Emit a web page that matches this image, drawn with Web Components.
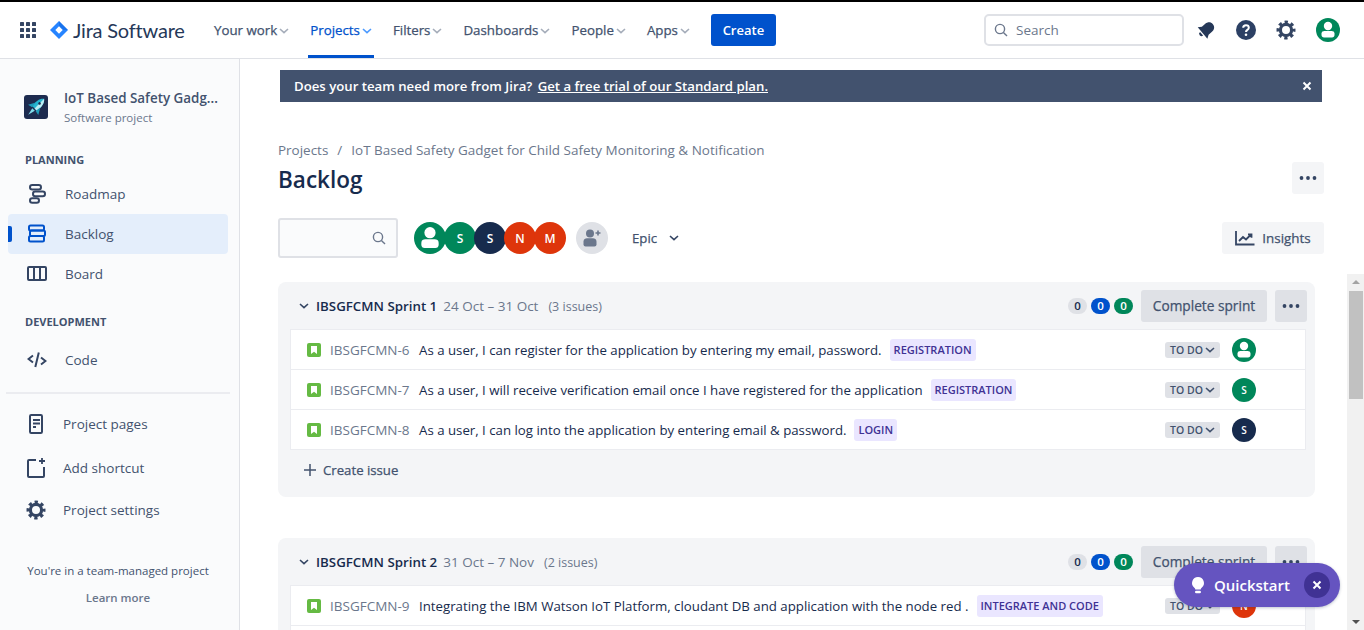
<!DOCTYPE html>
<html lang="en">
<head>
<meta charset="utf-8">
<title>Backlog</title>
<style>
    html, body { margin: 0; height: 100%; overflow: hidden; background: #fff; }
    body { font-family: "Open Sans", "Noto Sans", sans-serif; font-size: 13.5px; color: #172b4d; }
</style>
</head>
<body>
<jira-app></jira-app>
<script>
const icons = {
    grid: `<svg width="16" height="16" viewBox="0 0 16 16" fill="#344563"><rect x="0" y="0" width="4" height="4" rx=".6"/><rect x="6" y="0" width="4" height="4" rx=".6"/><rect x="12" y="0" width="4" height="4" rx=".6"/><rect x="0" y="6" width="4" height="4" rx=".6"/><rect x="6" y="6" width="4" height="4" rx=".6"/><rect x="12" y="6" width="4" height="4" rx=".6"/><rect x="0" y="12" width="4" height="4" rx=".6"/><rect x="6" y="12" width="4" height="4" rx=".6"/><rect x="12" y="12" width="4" height="4" rx=".6"/></svg>`,
    diamond: `<svg width="18" height="18" viewBox="0 0 18 18"><path d="M9 0l9 9-9 9-9-9z" fill="#2684ff"/><path d="M9 0l9 9-4.500 0L9 4.500z" fill="#0052cc" opacity=".35"/><rect x="6.400" y="6.400" width="5.200" height="5.200" transform="rotate(45 9 9)" fill="#fff"/></svg>`,
    chevron: `<svg width="10" height="6" viewBox="0 0 10 6" fill="none" stroke="currentColor" stroke-width="1.600"><path d="M1 1l4 3.600L9 1"/></svg>`,
    search: `<svg width="14" height="14" viewBox="0 0 14 14" fill="none" stroke="#6b778c" stroke-width="1.400"><circle cx="6" cy="6" r="4.600"/><path d="M9.400 9.400L13 13"/></svg>`,
    bell: `<svg width="20" height="20" viewBox="0 0 20 20" fill="#253858"><g transform="rotate(50 10 10)"><path d="M10 1c-3.400 0-5.200 2.600-5.200 5.600v4.400L2.500 14.500h15L15.200 11V6.600C15.200 3.600 13.400 1 10 1z"/><path d="M7.600 15.800h4.800a2.400 2.400 0 0 1-4.800 0z"/></g></svg>`,
    help: `<svg width="20" height="20" viewBox="0 0 20 20"><circle cx="10" cy="10" r="10" fill="#2c4064"/><path d="M7.200 7.800c0-1.600 1.300-2.500 2.800-2.500s2.800.9 2.800 2.400c0 2.200-2.800 2.100-2.800 4.200" fill="none" stroke="#fff" stroke-width="2"/><circle cx="10" cy="14.700" r="1.300" fill="#fff"/></svg>`,
    gear: `<svg width="20" height="20" viewBox="0 0 20 20" fill="none" stroke="#344563"><circle cx="10" cy="10" r="5.600" stroke-width="3.200"/><circle cx="10" cy="10" r="8" stroke-width="3" stroke-dasharray="3.300 2.983" stroke-dashoffset="1.650"/></svg>`,
    roadmap: `<svg width="20" height="20" viewBox="0 0 20 20" fill="none" stroke="#344563" stroke-width="2"><rect x="3" y="1" width="11" height="4.600" rx="2.300"/><rect x="6" y="7.600" width="12" height="4.600" rx="2.300"/><rect x="3" y="14.200" width="9" height="4.600" rx="2.300"/></svg>`,
    backlog: `<svg width="20" height="20" viewBox="0 0 20 20" fill="none" stroke="#0052cc" stroke-width="2"><rect x="2" y="1.500" width="15" height="5" rx="1.500"/><rect x="3" y="6.500" width="15" height="5.500" rx="1.500"/><rect x="2" y="12" width="15" height="5.500" rx="1.500"/></svg>`,
    board: `<svg width="20" height="20" viewBox="0 0 20 20" fill="none" stroke="#344563" stroke-width="2"><rect x="1" y="3" width="18" height="13" rx="1"/><path d="M7 3v13M13 3v13"/></svg>`,
    code: `<svg width="20" height="20" viewBox="0 0 20 20" fill="none" stroke="#344563" stroke-width="2"><path d="M6 5.500L1.500 9 6 12.500M14 7.500l4.500 3.500L14 14.500M11.800 2.500L8.300 17"/></svg>`,
    pages: `<svg width="16" height="20" viewBox="0 0 16 20" fill="none" stroke="#344563" stroke-width="2"><rect x="2" y="1" width="12" height="18" rx="1.200"/><path d="M5 6h7M5 9.500h7M5 13h3"/></svg>`,
    shortcut: `<svg width="20" height="20" viewBox="0 0 20 20" fill="none" stroke="#344563" stroke-width="2"><path d="M10 2H3a1 1 0 0 0-1 1v15a1 1 0 0 0 1 1h14a1 1 0 0 0 1-1V9"/><path d="M16 0v6M13 3h6" stroke-width="1.800"/></svg>`,
    story: `<svg width="14" height="14" viewBox="0 0 14 14"><rect width="14" height="14" rx="2" fill="#65ba43"/><path d="M4 3h6v8L7 8.800 4 11z" fill="#fff"/></svg>`,
    plus: `<svg width="14" height="14" viewBox="0 0 14 14" stroke="#42526e" stroke-width="1.500"><path d="M7 1v12M1 7h12"/></svg>`,
    close: `<svg width="10" height="10" viewBox="0 0 10 10" stroke="#fff" stroke-width="2"><path d="M1.500 1.500l7 7M8.500 1.500l-7 7"/></svg>`,
    dots: `<svg width="18" height="4" viewBox="0 0 18 4" fill="#344563"><circle cx="2.500" cy="2" r="1.900"/><circle cx="9" cy="2" r="1.900"/><circle cx="15.500" cy="2" r="1.900"/></svg>`,
    insights: `<svg width="20" height="16" viewBox="0 0 20 16" fill="none" stroke="#344563" stroke-width="1.800"><path d="M1 1v13.500h18.500"/><path d="M4 11l4-4 3 2.500 5-5M13 4.300h3.500v3.500"/></svg>`,
    bulb: `<svg width="14" height="17" viewBox="0 0 16 20" fill="#fff"><path d="M8 0a7 7 0 0 0-4.300 12.500c.7.600 1.100 1.300 1.100 2.200h6.400c0-.9.400-1.600 1.100-2.200A7 7 0 0 0 8 0z"/><rect x="4.500" y="16.200" width="7" height="3" rx="1.500"/></svg>`,
    addUser: `<svg width="20" height="20" viewBox="0 0 20 20" fill="#6b778c"><circle cx="8" cy="5.500" r="4"/><path d="M1.500 13.500c0-2.200 1.800-3.300 3.500-3.300h6c1.700 0 3.500 1.100 3.500 3.300v3a2 2 0 0 1-2 2h-9a2 2 0 0 1-2-2z"/><path d="M16 2.500v5M13.500 5h5" stroke="#6b778c" stroke-width="1.600"/></svg>`,
    rocket: `<svg width="24" height="24" viewBox="0 0 24 24"><rect width="24" height="24" rx="3" fill="#1d2b4f"/><g transform="rotate(45 12 12)"><path d="M12 .5c3.600 3 4.200 7.500 3.500 13.500h-7C7.800 8 8.400 3.500 12 .5z" fill="#27b5d0"/><path d="M12 .5c3.600 3 4.200 7.500 3.500 13.500H12z" fill="#bdeef5"/><path d="M8.800 9l-4 7 4.700-1zM15.200 9l4 7-4.700-1z" fill="#1f9cba"/><path d="M10.200 15.500h3.600L12 23z" fill="#7fdcea"/><circle cx="12" cy="7" r="1.300" fill="#1d2b4f"/></g></svg>`
};

class UserAvatar extends HTMLElement {
    connectedCallback() {
        const size = this.getAttribute('size') || 24;
        const color = this.getAttribute('color') || '#00875a';
        const letter = this.getAttribute('letter');
        const inner = letter ? letter : `<svg width="100%" height="100%" viewBox="0 0 24 24" fill="#fff"><circle cx="12" cy="8" r="4.200"/><path d="M5.500 15.500c0-1.700 1.400-2.500 3-2.500h7c1.600 0 3 .8 3 2.500v1.500c0 1.500-1 2.500-2.500 2.500h-8C6.500 19.500 5.500 18.500 5.500 17z"/></svg>`;
        this.attachShadow({ mode: 'open' }).innerHTML = `
            <style>
                :host { display: inline-flex; flex: none; }
                .a {
                    width: ${size}px;
                    height: ${size}px;
                    border-radius: 50%;
                    background: ${color};
                    color: #fff;
                    display: flex;
                    align-items: center;
                    justify-content: center;
                    font-weight: 600;
                    font-size: ${size > 24 ? 12 : 10}px;
                    overflow: hidden;
                }
            </style>
            <div class="a">${inner}</div>`;
    }
}
customElements.define('user-avatar', UserAvatar);

class TopItem extends HTMLElement {
    connectedCallback() {
        const active = this.hasAttribute('active');
        this.attachShadow({ mode: 'open' }).innerHTML = `
            <style>
                :host {
                    display: flex;
                    align-items: center;
                    gap: 2px;
                    height: 100%;
                    position: relative;
                    padding: 0 2px;
                    color: ${active ? '#0052cc' : '#42526e'};
                    font-weight: 500;
                    -webkit-text-stroke: .25px currentColor;
                    font-size: 13.3px;
                    white-space: nowrap;
                    flex: none;
                }
                i { color: ${active ? '#4c9aff' : '#a5adba'}; display: flex; margin-top: 1px; }
                b {
                    display: ${active ? 'block' : 'none'};
                    position: absolute;
                    left: 0; right: 0; bottom: 0;
                    height: 3px;
                    background: #0052cc;
                }
            </style>
            <slot></slot><i>${icons.chevron}</i><b></b>`;
    }
}
customElements.define('top-item', TopItem);

class TopNav extends HTMLElement {
    constructor() {
        super();
        this.attachShadow({ mode: 'open' }).innerHTML = `
            <style>
                :host {
                    display: flex;
                    align-items: center;
                    height: 56px;
                    border-top: 2px solid #000;
                    border-bottom: 1px solid #dfe1e6;
                    padding-left: 20px;
                    flex: none;
                    background: #fff;
                }
                .logo { display: flex; align-items: center; margin-left: 14px; gap: 5px; width: 162px; flex: none; }
                .logo span { font-family: "Lato", sans-serif; font-size: 20px; color: #253858; letter-spacing: -.2px; }
                nav { display: flex; align-items: center; height: 100%; gap: 17px; flex: none; }
                .create {
                    margin-left: 19px;
                    width: 65px;
                    height: 32px;
                    flex: none;
                    background: #0052cc;
                    color: #fff;
                    border-radius: 3px;
                    font-weight: 600;
                    font-size: 13px;
                    display: flex;
                    align-items: center;
                    justify-content: center;
                }
                .search {
                    margin-left: auto;
                    width: 200px;
                    height: 32px;
                    flex: none;
                    box-sizing: border-box;
                    border: 2px solid #dfe1e6;
                    border-radius: 5px;
                    display: flex;
                    align-items: center;
                    padding-left: 8px;
                    gap: 8px;
                    color: #6b778c;
                }
                .tools { display: flex; align-items: center; margin: 0 24px 0 12px; gap: 20px; flex: none; }
                svg { display: block; }
            </style>
            ${icons.grid}
            <div class="logo">${icons.diamond}<span>Jira Software</span></div>
            <nav>
                <top-item>Your work</top-item>
                <top-item active>Projects</top-item>
                <top-item>Filters</top-item>
                <top-item>Dashboards</top-item>
                <top-item>People</top-item>
                <top-item>Apps</top-item>
            </nav>
            <div class="create">Create</div>
            <div class="search">${icons.search}<span>Search</span></div>
            <div class="tools">
                ${icons.bell}${icons.help}${icons.gear}
                <user-avatar size="24"></user-avatar>
            </div>`;
    }
}
customElements.define('top-nav', TopNav);

class SideItem extends HTMLElement {
    connectedCallback() {
        const active = this.hasAttribute('active');
        const icon = icons[this.getAttribute('icon')];
        const small = this.hasAttribute('lower');
        this.attachShadow({ mode: 'open' }).innerHTML = `
            <style>
                :host {
                    display: flex;
                    align-items: center;
                    position: relative;
                    height: 40px;
                    margin: 0 11px 0 8px;
                    border-radius: 4px;
                    color: #42526e;
                    background: ${active ? '#e4eefb' : 'transparent'};
                }
                .ic { width: 20px; display: flex; justify-content: center; margin-left: ${small ? 18 : 19}px; }
                .tx { margin-left: ${small ? 17 : 18}px; }
                b {
                    display: ${active ? 'block' : 'none'};
                    position: absolute;
                    left: 0; top: 12px;
                    width: 4px; height: 16px;
                    background: #0052cc;
                    border-radius: 0 2px 2px 0;
                }
            </style>
            <b></b><span class="ic">${icon}</span><span class="tx"><slot></slot></span>`;
    }
}
customElements.define('side-item', SideItem);

class SideBar extends HTMLElement {
    constructor() {
        super();
        this.attachShadow({ mode: 'open' }).innerHTML = `
            <style>
                :host {
                    display: block;
                    width: 240px;
                    flex: none;
                    box-sizing: border-box;
                    background: #fafbfc;
                    border-right: 1px solid #dfe1e6;
                    overflow: hidden;
                }
                .project { display: flex; align-items: center; gap: 16px; padding: 28px 0 0 24px; height: 40px; }
                .project > div { min-width: 0; padding-top: 2px; }
                .name { font-weight: 600; font-size: 13.4px; color: #42526e; line-height: 20px; white-space: nowrap; }
                .type { font-size: 11.5px; color: #6b778c; line-height: 20px; }
                h4 { margin: 0; font-size: 11px; font-weight: 700; color: #42526e; padding-left: 25px; line-height: 16px; }
                .planning { margin-top: 25px; margin-bottom: 6px; }
                .development { margin-top: 20px; margin-bottom: 10px; }
                hr { border: 0; height: 2px; background: #ebecf0; margin: 12px 9px 10px 6px; }
                .foot { margin-top: 33px; text-align: center; font-size: 11.5px; color: #42526e; padding-right: 3px; }
                .foot .learn { margin-top: 12px; color: #6b778c; font-weight: 600; }
            </style>
            <div class="project">
                ${icons.rocket}
                <div>
                    <div class="name">IoT Based Safety Gadg...</div>
                    <div class="type">Software project</div>
                </div>
            </div>
            <h4 class="planning">PLANNING</h4>
            <side-item icon="roadmap">Roadmap</side-item>
            <side-item icon="backlog" active>Backlog</side-item>
            <side-item icon="board">Board</side-item>
            <h4 class="development">DEVELOPMENT</h4>
            <side-item icon="code">Code</side-item>
            <hr>
            <side-item icon="pages" lower>Project pages</side-item>
            <side-item icon="shortcut" lower style="margin-top:4px">Add shortcut</side-item>
            <side-item icon="gear" lower style="margin-top:2px">Project settings</side-item>
            <div class="foot">
                <div>You're in a team-managed project</div>
                <div class="learn">Learn more</div>
            </div>`;
    }
}
customElements.define('side-bar', SideBar);

class TrialBanner extends HTMLElement {
    constructor() {
        super();
        this.attachShadow({ mode: 'open' }).innerHTML = `
            <style>
                :host {
                    display: flex;
                    align-items: center;
                    justify-content: space-between;
                    height: 32px;
                    margin: 0 2px;
                    padding: 0 10px 0 14px;
                    background: #42526e;
                    color: #fff;
                    font-weight: 600;
                    font-size: 13.2px;
                }
                u { margin-left: 2px; }
                span { display: flex; }
            </style>
            <div>Does your team need more from Jira? <u>Get a free trial of our Standard plan.</u></div>
            <span>${icons.close}</span>`;
    }
}
customElements.define('trial-banner', TrialBanner);

class BacklogHead extends HTMLElement {
    constructor() {
        super();
        this.attachShadow({ mode: 'open' }).innerHTML = `
            <style>
                :host { display: block; flex: none; padding: 11px 40px 16px 38px; }
                .crumbs { margin-top: 38px; line-height: 20px; color: #6b778c; display: flex; gap: 9px; font-size: 13.48px; }
                .title { margin-top: 2px; height: 36px; display: flex; align-items: center; justify-content: space-between; }
                h1 { margin: 0 0 2px; font-size: 22.5px; font-weight: 600; color: #172b4d; }
                .more { width: 32px; height: 32px; margin-bottom: 4px; border-radius: 3px; background: #f4f5f7; display: flex; align-items: center; justify-content: center; }
                .filters { margin-top: 20px; height: 40px; display: flex; align-items: center; }
                .find {
                    width: 120px;
                    height: 40px;
                    box-sizing: border-box;
                    border: 2px solid #dfe1e6;
                    border-radius: 3px;
                    background: #fafbfc;
                    display: flex;
                    align-items: center;
                    justify-content: flex-end;
                    padding-right: 10px;
                }
                .people { margin-left: 16px; display: flex; }
                .people user-avatar { margin-right: -2px; }
                .add { margin-left: 12px; width: 32px; height: 32px; border-radius: 50%; background: #dfe1e6; display: flex; align-items: center; justify-content: center; }
                .epic { margin-left: 24px; color: #42526e; font-weight: 500; -webkit-text-stroke: .25px currentColor; font-size: 13.2px; display: flex; align-items: center; gap: 12px; }
                .epic i { color: #344563; display: flex; }
                .insights {
                    margin-left: auto;
                    width: 102px;
                    height: 32px;
                    background: #f4f5f7;
                    border-radius: 3px;
                    color: #42526e;
                    font-weight: 500;
                    -webkit-text-stroke: .25px currentColor;
                    font-size: 13.4px;
                    display: flex;
                    align-items: center;
                    justify-content: center;
                    gap: 7px;
                }
                svg { display: block; }
            </style>
            <trial-banner></trial-banner>
            <div class="crumbs"><span>Projects</span><span>/</span><span>IoT Based Safety Gadget for Child Safety Monitoring &amp; Notification</span></div>
            <div class="title"><h1>Backlog</h1><div class="more">${icons.dots}</div></div>
            <div class="filters">
                <div class="find">${icons.search}</div>
                <div class="people">
                    <user-avatar size="32"></user-avatar>
                    <user-avatar size="32" letter="S"></user-avatar>
                    <user-avatar size="32" letter="S" color="#172b4d"></user-avatar>
                    <user-avatar size="32" letter="N" color="#de350b"></user-avatar>
                    <user-avatar size="32" letter="M" color="#de350b"></user-avatar>
                </div>
                <div class="add">${icons.addUser}</div>
                <div class="epic">Epic <i>${icons.chevron}</i></div>
                <div class="insights">${icons.insights}Insights</div>
            </div>`;
    }
}
customElements.define('backlog-head', BacklogHead);

class IssueRow extends HTMLElement {
    connectedCallback() {
        const person = this.getAttribute('person') || '';
        const color = this.getAttribute('color') || '#00875a';
        const avatar = person ? `<user-avatar letter="${person}" color="${color}"></user-avatar>` : `<user-avatar></user-avatar>`;
        this.attachShadow({ mode: 'open' }).innerHTML = `
            <style>
                :host {
                    display: flex;
                    align-items: center;
                    height: 40px;
                    background: #fff;
                    border-bottom: 1px solid #ebecf0;
                    box-sizing: border-box;
                    padding-left: 16px;
                    white-space: nowrap;
                    font-size: 13.25px;
                }
                svg { display: block; flex: none; }
                .key { color: #6b778c; width: 89px; margin-left: 9px; flex: none; font-size: 13.5px; }
                .label {
                    margin-left: 8px;
                    background: #eae6ff;
                    color: #403294;
                    font-size: 11px;
                    font-weight: 600;
                    padding: 0 4px;
                    height: 22px;
                    line-height: 22px;
                    border-radius: 3px;
                }
                .right { margin-left: auto; display: flex; align-items: center; gap: 12px; padding-right: 49px; }
                .todo {
                    width: 55px;
                    height: 16px;
                    background: #dfe1e6;
                    color: #42526e;
                    border-radius: 3px;
                    font-size: 10.5px;
                    font-weight: 600;
                    display: flex;
                    align-items: center;
                    justify-content: center;
                    gap: 2px;
                }
                .todo i { display: flex; color: #42526e; }
            </style>
            ${icons.story}
            <span class="key">${this.getAttribute('key')}</span>
            <span><slot></slot></span>
            <span class="label">${this.getAttribute('label')}</span>
            <div class="right">
                <div class="todo">TO DO <i>${icons.chevron}</i></div>
                ${avatar}
            </div>`;
    }
}
customElements.define('issue-row', IssueRow);

class SprintCard extends HTMLElement {
    connectedCallback() {
        // the second sprint runs off the bottom of the window, so it has no footer in view
        const openEnd = this.hasAttribute('open-end');
        this.attachShadow({ mode: 'open' }).innerHTML = `
            <style>
                :host {
                    display: block;
                    background: #f4f5f7;
                    border-radius: 8px;
                    padding: 0 9px 0 12px;
                    margin-bottom: 41px;
                }
                header { height: 47px; display: flex; align-items: center; padding-left: 9px; white-space: nowrap; }
                header i { display: flex; color: #344563; width: 17px; }
                .name { font-weight: 600; font-size: 13.3px; color: #172b4d; }
                .when { color: #6b778c; font-size: 13.5px; margin-left: 6px; }
                .when span { margin-left: 10px; font-size: 12.5px; }
                .right { margin-left: auto; display: flex; align-items: center; margin-right: -1px; }
                .n {
                    width: 19px; height: 16px; border-radius: 8px;
                    font-size: 11.5px; font-weight: 600;
                    display: flex; align-items: center; justify-content: center;
                    margin-right: 4px;
                }
                .btn {
                    height: 32px; background: #dfe1e6; border-radius: 3px; color: #42526e;
                    display: flex; align-items: center; justify-content: center;
                    font-weight: 500; -webkit-text-stroke: .25px currentColor; font-size: 13.7px;
                }
                .complete { width: 126px; margin-left: 4px; }
                .more { width: 32px; margin-left: 8px; }
                .list { border: 1px solid #ebecf0; border-bottom: 0; }
                .create {
                    height: 47px;
                    box-sizing: border-box;
                    padding: 0 0 7px 13px;
                    display: flex;
                    align-items: center;
                    gap: 6px;
                    color: #42526e;
                    font-weight: 500;
                    -webkit-text-stroke: .25px currentColor;
                    font-size: 13.2px;
                }
                .create svg { display: block; }
                .rest { height: 40px; background: #fff; }
            </style>
            <header>
                <i>${icons.chevron}</i>
                <span class="name">${this.getAttribute('name')}</span>
                <span class="when">${this.getAttribute('dates')}<span>${this.getAttribute('count')}</span></span>
                <div class="right">
                    <div class="n" style="background:#dfe1e6;color:#172b4d">0</div>
                    <div class="n" style="background:#0052cc;color:#fff">0</div>
                    <div class="n" style="background:#00875a;color:#fff">0</div>
                    <div class="btn complete">Complete sprint</div>
                    <div class="btn more">${icons.dots}</div>
                </div>
            </header>
            <div class="list"><slot></slot>${openEnd ? '<div class="rest"></div>' : ''}</div>
            ${openEnd ? '' : `<div class="create">${icons.plus}Create issue</div>`}`;
    }
}
customElements.define('sprint-card', SprintCard);

class FakeScrollbar extends HTMLElement {
    constructor() {
        super();
        this.attachShadow({ mode: 'open' }).innerHTML = `
            <style>
                :host {
                    display: flex;
                    flex-direction: column;
                    align-items: center;
                    width: 17px;
                    flex: none;
                    background: #f1f1f1;
                }
                .up { margin-top: 6px; width: 0; height: 0; border: 4px solid transparent; border-top: 0; border-bottom: 4px solid #a3a3a3; }
                .thumb { margin-top: 7px; width: 14px; height: 108px; background: #c1c1c1; }
                .down { margin-top: auto; margin-bottom: 6px; width: 0; height: 0; border: 4px solid transparent; border-bottom: 0; border-top: 4px solid #505050; }
            </style>
            <div class="up"></div><div class="thumb"></div><div class="down"></div>`;
    }
}
customElements.define('fake-scrollbar', FakeScrollbar);

class QuickStart extends HTMLElement {
    constructor() {
        super();
        this.attachShadow({ mode: 'open' }).innerHTML = `
            <style>
                :host {
                    position: absolute;
                    left: 1174px;
                    top: 563px;
                    width: 166px;
                    height: 44px;
                    box-sizing: border-box;
                    padding: 0 10px 0 17px;
                    border-radius: 22px;
                    background: #6554c0;
                    color: #fff;
                    display: flex;
                    align-items: center;
                    font-weight: 600;
                    font-size: 15px;
                    box-shadow: 0 1px 3px rgba(9, 30, 66, .25);
                }
                span { margin-left: 9px; }
                div { margin-left: auto; width: 26px; height: 26px; border-radius: 50%; background: #403294; display: flex; align-items: center; justify-content: center; }
                svg { display: block; }
            </style>
            ${icons.bulb}<span>Quickstart</span><div>${icons.close}</div>`;
    }
}
customElements.define('quick-start', QuickStart);

class JiraApp extends HTMLElement {
    constructor() {
        super();
        this.attachShadow({ mode: 'open' }).innerHTML = `
            <style>
                :host { display: flex; flex-direction: column; height: 630px; overflow: hidden; position: relative; }
                .body { flex: 1; min-height: 0; display: flex; }
                main { flex: 1; min-width: 0; display: flex; flex-direction: column; }
                .scroll { flex: 1; min-height: 0; display: flex; }
                .sprints { flex: 1; min-width: 0; overflow: hidden; padding: 8px 32px 0 38px; }
            </style>
            <top-nav></top-nav>
            <div class="body">
                <side-bar></side-bar>
                <main>
                    <backlog-head></backlog-head>
                    <div class="scroll">
                        <div class="sprints">
                            <sprint-card name="IBSGFCMN Sprint 1" dates="24 Oct – 31 Oct" count="(3 issues)">
                                <issue-row key="IBSGFCMN-6" label="REGISTRATION">As a user, I can register for the application by entering my email, password.</issue-row>
                                <issue-row key="IBSGFCMN-7" label="REGISTRATION" person="S">As a user, I will receive verification email once I have registered for the application</issue-row>
                                <issue-row key="IBSGFCMN-8" label="LOGIN" person="S" color="#172b4d">As a user, I can log into the application by entering email &amp; password.</issue-row>
                            </sprint-card>
                            <sprint-card name="IBSGFCMN Sprint 2" dates="31 Oct – 7 Nov" count="(2 issues)" open-end>
                                <issue-row key="IBSGFCMN-9" label="INTEGRATE AND CODE" person="N" color="#de350b">Integrating the IBM Watson IoT Platform, cloudant DB and application with the node red .</issue-row>
                            </sprint-card>
                        </div>
                        <fake-scrollbar></fake-scrollbar>
                    </div>
                </main>
            </div>
            <quick-start></quick-start>`;
    }
}
customElements.define('jira-app', JiraApp);
</script>
</body>
</html>
